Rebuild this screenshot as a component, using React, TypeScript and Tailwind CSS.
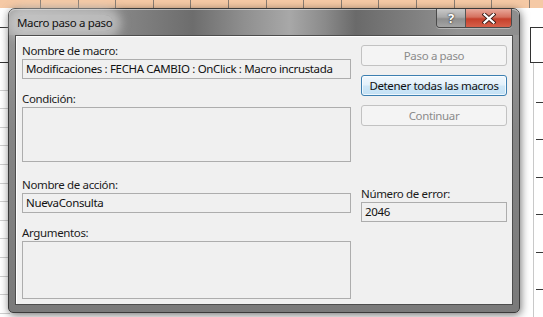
import { Fragment } from 'react';

const font = "font-['Noto_Sans','Open_Sans',sans-serif]";

function Sheet() {
  const cols = Array.from({ length: 14 });
  const leftRows = Array.from({ length: 13 });
  const rightTicks = Array.from({ length: 6 });

  return (
    <div className="flex h-full w-full flex-col">
      {/* column header strip */}
      <div className="flex h-[8px] shrink-0 bg-[#f5c9a5]">
        <div className="w-[40px] shrink-0" />
        {cols.map((_, i) => (
          <div key={i} className="w-[37.6px] shrink-0 border-l border-[#8a7d72]" />
        ))}
      </div>
      <div className="flex flex-1">
        {/* left sliver of cells */}
        <div className="flex w-[10px] flex-col">
          <div className="h-[19px] shrink-0" />
          <div className="h-[36px] shrink-0 border-y border-[#333]" />
          <div className="h-[9px] shrink-0" />
          {leftRows.map((_, i) => (
            <div key={i} className="h-[18.6px] shrink-0 border-b border-[#cfcfcf]" />
          ))}
        </div>
        <div className="flex-1" />
        {/* right sliver of cells */}
        <div className="flex w-[24px] flex-col">
          <div className="h-[19px] shrink-0" />
          <div className="ml-[11px] h-[36px] shrink-0 border-y border-l border-[#333]" />
          <div className="ml-[14px] flex flex-1 flex-col border-l border-[#c9c9c9]">
            <div className="h-[39px] shrink-0" />
            {rightTicks.map((_, i) => (
              <Fragment key={i}>
                <div className="ml-[2px] h-px shrink-0 bg-[#3a3a3a]" />
                <div className="h-[36.4px] shrink-0" />
              </Fragment>
            ))}
          </div>
        </div>
      </div>
    </div>
  );
}

const txt = 'text-[11.5px] tracking-[-0.35px] whitespace-nowrap';

function Field({ value, tall }: { value?: string; tall?: string }) {
  return (
    <div
      className={`flex border border-[#adadad] bg-[#f0f0f0] px-[3px] leading-[16px] text-[#111] ${txt} ${
        tall ?? 'h-[20px] items-center'
      }`}
    >
      {value}
    </div>
  );
}

function Label({ children, className = '' }: { children: string; className?: string }) {
  return <div className={`h-[16px] leading-[16px] text-[#1b1b1b] ${txt} ${className}`}>{children}</div>;
}

function Button({ children, active }: { children: string; active?: boolean }) {
  if (active) {
    return (
      <div
        className={`flex h-[21px] items-center justify-center rounded-[3px] border border-[#3c7fb1] bg-[linear-gradient(180deg,#f1f8fd_0%,#e3f1fb_48%,#cfe7f7_52%,#c3e1f5_100%)] text-[#111] shadow-[inset_0_0_0_1px_rgba(255,255,255,0.7)] ${txt}`}
      >
        {children}
      </div>
    );
  }
  return (
    <div
      className={`flex h-[21px] items-center justify-center rounded-[3px] border border-[#c2c2c2] bg-[#f4f4f4] text-[#8b8b8b] ${txt}`}
    >
      {children}
    </div>
  );
}

function CaptionButtons() {
  return (
    <div className="flex h-[19px] overflow-hidden rounded-b-[4px] border border-t-0 border-[#4a4a4a] shadow-[0_1px_0_rgba(255,255,255,0.35)]">
      <div className="flex w-[29px] items-center justify-center border-r border-[#555] bg-[linear-gradient(180deg,#c9c9c9_0%,#a9a9a9_45%,#8e8e8e_55%,#a4a4a4_100%)] text-[13px] font-bold leading-none text-white [text-shadow:0_0_2px_#333,0_0_1px_#222]">
        ?
      </div>
      <div className="flex w-[45px] items-center justify-center bg-[linear-gradient(180deg,#e9a99b_0%,#d5715f_45%,#c5402c_55%,#d6604a_100%)]">
        <svg width="14" height="11" viewBox="0 0 14 11">
          <path d="M2.5 1.5 L11.5 9.5 M11.5 1.5 L2.5 9.5" stroke="#3b1b16" strokeWidth="4" strokeLinecap="square" />
          <path d="M2.5 1.5 L11.5 9.5 M11.5 1.5 L2.5 9.5" stroke="#fff" strokeWidth="2.3" strokeLinecap="square" />
        </svg>
      </div>
    </div>
  );
}

export default function App() {
  return (
    <div className={`relative h-[317px] w-[543px] overflow-hidden bg-white ${font}`}>
      <Sheet />

      {/* dialog window */}
      <div className="absolute left-[8px] top-[8px] flex h-[305px] w-[512px] flex-col rounded-t-[7px] rounded-b-[5px] border border-[#3a3a3a] bg-[linear-gradient(180deg,#9b9b9b_0%,#858585_40%,#7a7a7a_100%)] px-[6px] pb-[7px] shadow-[1px_2px_9px_rgba(0,0,0,0.55)]">
        {/* title bar */}
        <div className="-mx-[6px] flex h-[26px] shrink-0 items-start rounded-t-[6px] bg-[linear-gradient(90deg,#a3a3a3_0%,#929292_15%,#6d6d6d_36%,#8f8f8f_46%,#a8a8a8_55%,#8a8a8a_62%,#6a6a6a_68%,#7d7d7d_78%,#929292_88%,#8e8e8e_100%)] pr-[7px] shadow-[inset_0_1px_0_rgba(255,255,255,0.45)]">
          <div
            className={`ml-[7px] mt-[6px] rounded-full bg-[#d9d9d9]/60 px-[1px] leading-[16px] text-[#111] shadow-[0_0_10px_8px_rgba(220,220,220,0.55)] ${txt}`}
          >
            Macro paso a paso
          </div>
          <div className="flex-1" />
          <CaptionButtons />
        </div>

        {/* client area */}
        <div className="flex flex-1 gap-[10px] border border-[#4d4d4d] bg-[#f0f0f0] pl-[6px] pr-[5px] pt-[7px] shadow-[inset_1px_1px_0_#ffffff]">
          {/* left column */}
          <div className="flex w-[329px] flex-col">
            <Label>Nombre de macro:</Label>
            <Field value="Modificaciones : FECHA CAMBIO : OnClick : Macro incrustada" />
            <Label className="mt-[12px]">Condición:</Label>
            <Field tall="h-[55px]" />
            <Label className="mt-[15px]">Nombre de acción:</Label>
            <Field value="NuevaConsulta" />
            <Label className="mt-[12px]">Argumentos:</Label>
            <Field tall="h-[58px]" />
          </div>

          {/* right column */}
          <div className="flex w-[146px] flex-col">
            <div className="mt-[2px] flex flex-col gap-[9px]">
              <Button>Paso a paso</Button>
              <Button active>Detener todas las macros</Button>
              <Button>Continuar</Button>
            </div>
            <Label className="mt-[60px]">Número de error:</Label>
            <Field value="2046" />
          </div>
        </div>
      </div>
    </div>
  );
}
